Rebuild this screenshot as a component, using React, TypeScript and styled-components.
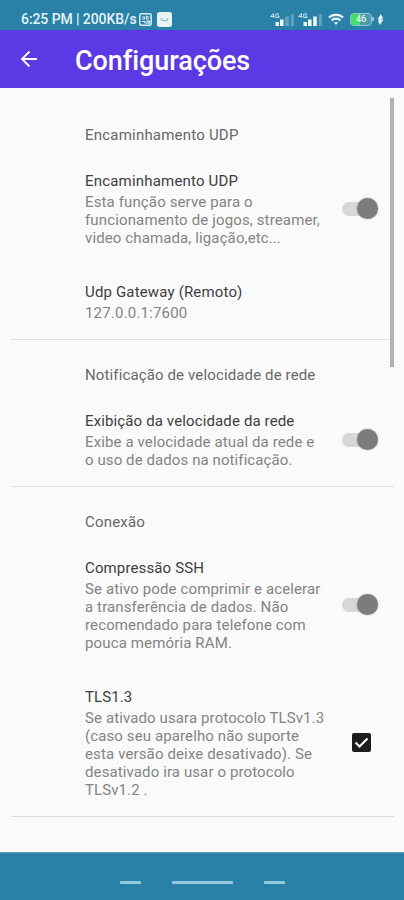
import React from 'react';
import styled, { createGlobalStyle } from 'styled-components';

const Global = createGlobalStyle`
  * { box-sizing: border-box; }
  body { margin: 0; background: #fafafa; font-family: Roboto, "Liberation Sans", sans-serif; }
`;

const Screen = styled.div`
  display: flex;
  flex-direction: column;
  width: 404px;
  height: 900px;
  overflow: hidden;
  background: #fafafa;
`;

const StatusBar = styled.div`
  display: flex;
  justify-content: space-between;
  flex: none;
  height: 30px;
  padding: 9px 18px 0 21px;
  background: #2981a8;
  color: #e4f3f8;
`;

const StatusGroup = styled.div`
  display: flex;
  align-items: center;
  height: 20px;
`;

const Clock = styled.span`
  width: 118px;
  font-size: 14px;
  font-weight: 500;
  line-height: 21px;
  letter-spacing: -0.08px;
  white-space: nowrap;
`;

const AppBar = styled.header`
  display: flex;
  align-items: center;
  flex: none;
  height: 58px;
  padding-left: 20px;
  background: #5b39e4;
  color: #fff;
`;

const BackButton = styled.button`
  display: flex;
  width: 55px;
  padding: 0;
  border: 0;
  background: none;
  color: inherit;
`;

const PageTitle = styled.h1`
  margin: 3px 0 0;
  font-size: 27px;
  font-weight: 500;
  line-height: 32px;
  letter-spacing: -0.07px;
`;

const Content = styled.main`
  display: flex;
  flex: 1;
  min-height: 0;
`;

const List = styled.div`
  flex: none;
  width: 394px;
  padding: 12px 0 0 11px;
`;

const ScrollTrack = styled.div`
  flex: none;
  width: 14px;
  margin-left: -4px;
  padding-top: 10px;
`;

const ScrollThumb = styled.div`
  width: 4px;
  height: 269px;
  background: #b2b2b2;
`;

const Section = styled.section`
  border-bottom: 1px solid #dedede;
`;

const SectionTitle = styled.h2<{ $spacing: number }>`
  margin: 0;
  padding: 26px 0 9px 74px;
  font-size: 15px;
  font-weight: 400;
  line-height: 18px;
  letter-spacing: ${p => p.$spacing}px;
  color: #686868;
`;

const Row = styled.div<{ $last?: boolean }>`
  display: flex;
  align-items: center;
  padding: 19px 0 17px 74px;
`;

const Texts = styled.div`
  flex: none;
  width: 256px;
`;

const Title = styled.div<{ $spacing: number }>`
  margin-bottom: 3px;
  font-size: 15px;
  line-height: 18px;
  letter-spacing: ${p => p.$spacing}px;
  color: #3e3e3e;
`;

const Line = styled.div<{ $spacing: number }>`
  font-size: 15px;
  line-height: 18px;
  letter-spacing: ${p => p.$spacing}px;
  white-space: nowrap;
  color: #848484;
`;

const SwitchTrack = styled.div`
  display: flex;
  align-items: center;
  justify-content: flex-end;
  width: 36px;
  height: 14px;
  margin: 0 0 2px 1px;
  border-radius: 7px;
  background: #d7d7d7;
`;

const SwitchThumb = styled.div`
  flex: none;
  width: 21px;
  height: 21px;
  border-radius: 50%;
  background: #7c7c7c;
  box-shadow: 0 0 2px #aaa;
`;

const CheckBox = styled.div`
  display: flex;
  width: 19px;
  height: 19px;
  margin: 0 0 2px 11px;
  border-radius: 2px;
  background: #1d1d20;
`;

const NavBar = styled.nav`
  display: flex;
  justify-content: center;
  flex: none;
  gap: 31px;
  height: 48px;
  padding: 28px 0 0 1px;
  border-top: 1px solid #61a1ba;
  background: #2981a8;
`;

const NavMark = styled.div<{ $long?: boolean }>`
  width: ${p => (p.$long ? 61 : 21)}px;
  height: 3px;
  border-radius: 1px;
  background: #92c9df;
`;

const CardIcon = () => (
  <svg width="13" height="13" viewBox="0 0 13 13" fill="none" stroke="#d8edf4">
    <rect x=".8" y=".8" width="11.4" height="11.4" rx="1.5" strokeWidth="1.5" />
    <path d="M3 4h2.5v2H3M3 8.5h3v2M7.5 2.5V6H10M7.5 4h3M8 8.2h2.5v2H8z" strokeWidth="1.2" />
  </svg>
);

const BagIcon = () => (
  <svg width="15" height="15" viewBox="0 0 15 15">
    <rect width="15" height="15" rx="2.5" fill="#e8f2f5" />
    <path d="M4 6c0 3.6 7 3.6 7 0" fill="none" stroke="#8db5c5" strokeWidth="1.1" />
  </svg>
);

const SignalIcon = ({ strong = false }: { strong?: boolean }) => (
  <svg width="28" height="16" viewBox="0 0 28 16">
    <g fill="none" stroke="#c3e0e9" strokeWidth="1">
      <path d="M3.5 7V2.5L.7 5.5h3.8M9 3H5.8v3.5H9V5H7.5" />
    </g>
    <g fill="#eefafd">
      <rect x="5.5" y="11" width="3.4" height="4" />
      <rect x="10" y="8.5" width="3.6" height="6.5" />
      <rect x="15.2" y="5.5" width="3.6" height="9.5" opacity={strong ? 1 : 0.3} />
      <rect x="20.8" y="3" width="3" height="12" opacity=".28" />
    </g>
  </svg>
);

const WifiIcon = () => (
  <svg width="16" height="13" viewBox="0 0 16 13" fill="none" stroke="#edf9fc">
    <path d="M1 4.5C5 .8 11 .8 15 4.5" strokeWidth="2.3" />
    <path d="M3.7 7.4C6 5 10 5 12.3 7.4" strokeWidth="2.1" />
    <path d="M5.8 9.2h4.4L8 12z" fill="#edf9fc" stroke="none" />
  </svg>
);

const BatteryWrap = styled.div`
  display: flex;
  align-items: center;
  margin-left: 6px;
`;

const Battery = styled.div`
  width: 22px;
  height: 13px;
  border: 1.5px solid #8ec6d3;
  border-radius: 4px;
  background: linear-gradient(90deg, #43df65 9px, #4f9dac 9px);
  color: #e2fae9;
  font-size: 9px;
  font-weight: 500;
  line-height: 11px;
  text-align: center;
`;

const BatteryTip = styled.div`
  width: 2px;
  height: 4px;
  background: #8ec6d3;
`;

const BoltIcon = () => (
  <svg width="7" height="13" viewBox="0 0 7 13">
    <path d="M3.8 1 .5 6.5h2v1H.8L3 12l3.5-5.5h-2v-1h1.7z" fill="#e5f8fb" />
  </svg>
);

const BagSlot = styled.span`
  display: flex;
  margin-left: 5px;
`;

const BoltSlot = styled.span`
  display: flex;
  margin: 0 2px 0 3px;
`;

const WifiSlot = styled.span`
  display: flex;
  margin-left: 2px;
`;

const BackArrow = () => (
  <svg width="18" height="18" viewBox="0 0 18 18" fill="none" stroke="currentColor" strokeWidth="1.8">
    <path d="M17 9H2.5M9.5 1.5 2 9l7.5 7.5" />
  </svg>
);

type Text = [string, number];
type Item = { title: Text; lines: Text[]; control?: 'switch' | 'check' };

const sections: { heading: Text; items: Item[] }[] = [
  {
    heading: ['Encaminhamento UDP', 0.21],
    items: [
      {
        title: ['Encaminhamento UDP', 0.19],
        lines: [['Esta função serve para o', 0.13], ['funcionamento de jogos, streamer,', 0.14], ['video chamada, ligação,etc...', 0.12]],
        control: 'switch',
      },
      { title: ['Udp Gateway (Remoto)', 0.16], lines: [['127.0.0.1:7600', 0.19]] },
    ],
  },
  {
    heading: ['Notificação de velocidade de rede', 0.13],
    items: [
      {
        title: ['Exibição da velocidade da rede', 0.13],
        lines: [['Exibe a velocidade atual da rede e', 0.12], ['o uso de dados na notificação.', 0.09]],
        control: 'switch',
      },
    ],
  },
  {
    heading: ['Conexão', 0.2],
    items: [
      {
        title: ['Compressão SSH', 0.13],
        lines: [['Se ativo pode comprimir e acelerar', 0.12], ['a transferência de dados. Não', 0.12], ['recomendado para telefone com', 0.13], ['pouca memória RAM.', 0.14]],
        control: 'switch',
      },
      {
        title: ['TLS1.3', 0.1],
        lines: [['Se ativado usara protocolo TLSv1.3', 0.11], ['(caso seu aparelho não suporte', 0.11], ['esta versão deixe desativado). Se', 0.13], ['desativado ira usar o protocolo', 0.11], ['TLSv1.2 .', 0.1]],
        control: 'check',
      },
    ],
  },
];

export default function App() {
  return (
    <Screen>
      <Global />
      <StatusBar>
        <StatusGroup>
          <Clock>6:25 PM | 200KB/s</Clock>
          <CardIcon />
          <BagSlot><BagIcon /></BagSlot>
        </StatusGroup>
        <StatusGroup>
          <SignalIcon />
          <SignalIcon strong />
          <WifiSlot><WifiIcon /></WifiSlot>
          <BatteryWrap>
            <Battery>46</Battery>
            <BatteryTip />
          </BatteryWrap>
          <BoltSlot><BoltIcon /></BoltSlot>
        </StatusGroup>
      </StatusBar>
      <AppBar>
        <BackButton aria-label="Voltar"><BackArrow /></BackButton>
        <PageTitle>Configurações</PageTitle>
      </AppBar>
      <Content>
        <List>
          {sections.map(section => (
            <Section key={section.heading[0]}>
              <SectionTitle $spacing={section.heading[1]}>{section.heading[0]}</SectionTitle>
              {section.items.map(item => (
                <Row key={item.title[0]}>
                  <Texts>
                    <Title $spacing={item.title[1]}>{item.title[0]}</Title>
                    {item.lines.map(([text, spacing]) => (
                      <Line key={text} $spacing={spacing}>{text}</Line>
                    ))}
                  </Texts>
                  {item.control === 'switch' && <SwitchTrack><SwitchThumb /></SwitchTrack>}
                  {item.control === 'check' && (
                    <CheckBox>
                      <svg width="19" height="19" viewBox="0 0 19 19" fill="none" stroke="#fff" strokeWidth="2">
                        <path d="m3.5 9.5 4 4 8-8" />
                      </svg>
                    </CheckBox>
                  )}
                </Row>
              ))}
            </Section>
          ))}
        </List>
        <ScrollTrack><ScrollThumb /></ScrollTrack>
      </Content>
      <NavBar><NavMark /><NavMark $long /><NavMark /></NavBar>
    </Screen>
  );
}
